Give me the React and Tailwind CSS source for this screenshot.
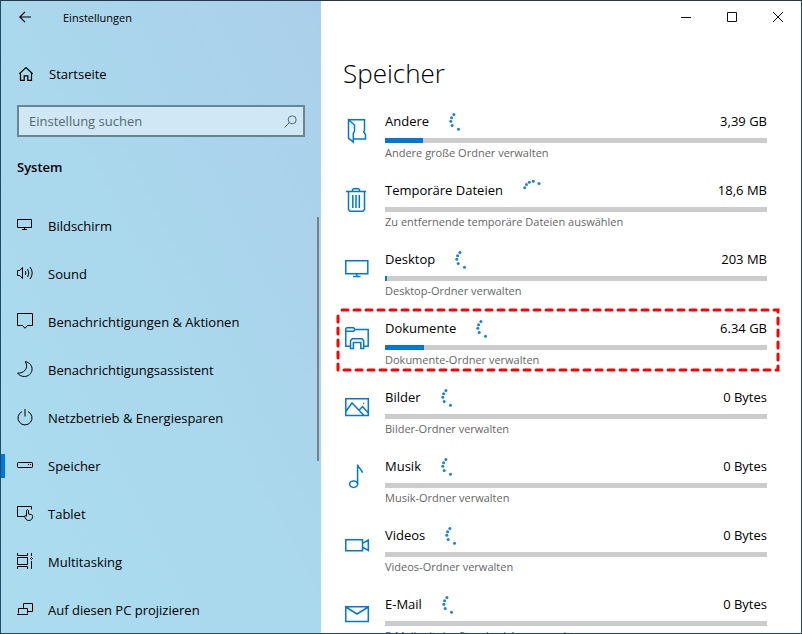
import React, { useState } from "react";

const NAV_ITEMS = [
  {
    id: "display",
    label: "Bildschirm",
    icon: <path d="M.5 2.5h14v8H.5zM7.5 10.5v2M5 12.5h5" />,
  },
  {
    id: "sound",
    label: "Sound",
    icon: (
      <>
        <path d="M.5 5.5v5h2.3L5.5 13.5V2.5L2.8 5.5z" />
        <path d="M8.3 6q1.2 2 0 4M10.6 4q2.6 4 0 8M13 2q4.4 6 0 12" />
      </>
    ),
  },
  {
    id: "notifications",
    label: "Benachrichtigungen & Aktionen",
    icon: <path d="M.5.5h15v12h-5L8 15.3 5.500 12.500h-5z" />,
  },
  {
    id: "focus",
    label: "Benachrichtigungsassistent",
    icon: (
      <path d="M8.300.6c4.500.9 7.200 4.400 6.700 8.400-.5 3.900-3.900 6.500-7.700 6.500-2.800 0-5.300-1.300-6.700-3.400C6.500 12.500 12.300 7.600 8.300.6z" />
    ),
  },
  {
    id: "power",
    label: "Netzbetrieb & Energiesparen",
    icon: <path d="M5 2.600a7 7 0 1 0 6 0M8 0v7.500" />,
  },
  {
    id: "storage",
    label: "Speicher",
    icon: (
      <>
        <rect x=".5" y="5.500" width="15" height="5" rx=".8" />
        <path d="M11 7.500h1M13 7.500h1" />
      </>
    ),
  },
  {
    id: "tablet",
    label: "Tablet",
    icon: (
      <>
        <path d="M14.500 4.500v-3H.5v10H7" />
        <path d="M9.500 11V5.500q1-1.500 2 0V9l3 .7q1.300.4 1.100 1.800c-.2 2.500-1.400 4-3.800 4S8.400 14 7.500 11q.8-1.200 2 .5" />
      </>
    ),
  },
  {
    id: "multitasking",
    label: "Multitasking",
    icon: (
      <>
        <path d="M.5 0v2.500h10V0M.5 4.500h10v7H.5zM.5 16v-2.500h10V16M14.500 0v3M14.500 8v8" />
        <path d="M14.500 4.500l1 1-1 1-1-1z" />
      </>
    ),
  },
  {
    id: "projecting",
    label: "Auf diesen PC projizieren",
    icon: (
      <path d="M6.500 7V2.500h9v8h-5M1.500 12.500v-5h9v5M0 13.500h11" />
    ),
  },
];

const STORAGE_ITEMS = [
  {
    label: "Andere",
    size: "3,39 GB",
    hint: "Andere große Ordner verwalten",
    percent: 10,
    icon: (
      <path d="M3.500.8l6 5.200v6l-1.200 2.500v8.700l-4.800-4zM3.500.8h16v10.400l-.8 1.800 1.800 2.500v4.500H8.500" />
    ),
  },
  {
    label: "Temporäre Dateien",
    size: "18,6 MB",
    hint: "Zu entfernende temporäre Dateien auswählen",
    percent: 0,
    spinnerPhase: "top",
    icon: (
      <path d="M1 3.500h20M7.500 3.500v-2l1-.8h5l1 .8v2M3.500 3.500v18l1.500 1.800h13l1.500-1.800v-18M7.800 7v13M11 7v13M14.300 7v13" />
    ),
  },
  {
    label: "Desktop",
    size: "203 MB",
    hint: "Desktop-Ordner verwalten",
    percent: 0.5,
    icon: <path d="M.8 3.700h22v13H.8zM11.800 16.700v3M8 19.600h7.500" />,
  },
  {
    label: "Dokumente",
    size: "6.34 GB",
    hint: "Dokumente-Ordner verwalten",
    percent: 10.3,
    highlighted: true,
    icon: (
      <path d="M5.500 20.300H.8V2.700l1-1h6.700l1.500 1.800h13.200v16.800h-4.500M.8 5.200h7.700L10 3.500M5.500 22.400v-7.600l1.700-2h9.800l1.700 2v7.600h-2.900v-5.900H8.400v5.900z" />
    ),
  },
  {
    label: "Bilder",
    size: "0 Bytes",
    hint: "Bilder-Ordner verwalten",
    percent: 0,
    icon: (
      <>
        <path d="M.8 3.700h22.500v16.800H.8zM.8 16.500l6.200-8.500 12 12.500M14 15.200l3.500-3.700 5.800 6.500" />
        <path d="M18 8.500h1.200" />
      </>
    ),
  },
  {
    label: "Musik",
    size: "0 Bytes",
    hint: "Musik-Ordner verwalten",
    percent: 0,
    icon: (
      <>
        <ellipse cx="8.600" cy="20.200" rx="4" ry="3.200" />
        <path d="M12.600 20.200V.5c.3 3.500 4.600 4.500 4.700 8.300" />
      </>
    ),
  },
  {
    label: "Videos",
    size: "0 Bytes",
    hint: "Videos-Ordner verwalten",
    percent: 0,
    icon: <path d="M.8 6.700h16.700v11H.8zM17.500 10.300l5.800-3.300v10.500l-5.800-3.300" />,
  },
  {
    label: "E-Mail",
    size: "0 Bytes",
    hint: "E-Mail mit der Standard-App verwalten",
    percent: 0,
    icon: <path d="M.8 4.800h22.500v14.700H.8zM.8 5l11.200 7L23.300 5" />,
  },
];

const SPINNER_DOTS = {
  left: [[4.9, 3.6], [2.6, 6.7], [1.8, 10.2], [3.2, 14.6], [9.5, 18.3]],
  top: [[1.7, 7.7], [3.5, 4.4], [6.3, 2.2], [10.3, 1.2], [16, 3.4]],
};

const Spinner = ({ phase = "left" }) => (
  <svg viewBox="0 0 20 20" className="size-5 shrink-0" fill="#1a83d8" aria-hidden="true">
    {SPINNER_DOTS[phase].map(([cx, cy]) => (
      <circle key={cx} cx={cx} cy={cy} r="1.500" />
    ))}
  </svg>
);

const HighlightFrame = () => (
  <span className="absolute -top-1.5 -right-[11px] bottom-0 -left-[7px] pointer-events-none">
    <svg className="w-full h-full overflow-visible" aria-hidden="true">
      <rect
        width="100%"
        height="100%"
        fill="none"
        stroke="#fe0000"
        strokeWidth="3"
        strokeLinecap="round"
        strokeDasharray="6 6"
        strokeDashoffset="-4"
      />
    </svg>
  </span>
);

const NavItem = ({ item, active, onSelect }) => (
  <li>
    <button
      type="button"
      onClick={() => onSelect(item.id)}
      aria-current={active ? "page" : undefined}
      className="relative flex items-center w-full h-12 gap-3.5 pl-4 text-left"
    >
      {active && <span className="absolute left-0 w-1 h-6 bg-[#0078d7]" />}
      <svg
        viewBox="0 0 17 18"
        className="w-[17px] h-[18px] shrink-0 overflow-visible"
        fill="none"
        stroke="currentColor"
        aria-hidden="true"
      >
        {item.icon}
      </svg>
      <span className="pt-0.5">{item.label}</span>
    </button>
  </li>
);

const Sidebar = () => {
  const [activeId, setActiveId] = useState("storage");
  const [query, setQuery] = useState("");

  return (
    <aside className="relative flex flex-col w-80 shrink-0 overflow-hidden bg-linear-to-tr from-[#aadcee] via-[#aad8ed] to-[#abcfea]">
      <header className="flex items-center h-8 gap-8 pl-[18px] text-[11px] shrink-0">
        <button type="button" aria-label="Zurück">
          <svg viewBox="0 0 12 12" className="size-3" fill="none" stroke="currentColor" strokeWidth="1.200">
            <path d="M6 .8L.8 6 6 11.200M.8 6H12" />
          </svg>
        </button>
        <span className="pt-0.5">Einstellungen</span>
      </header>

      <a href="#startseite" className="flex items-center h-12 gap-4 pl-[18px] mt-[17px] shrink-0">
        <svg viewBox="0 0 14 14" className="size-3.5" fill="none" stroke="currentColor" strokeWidth="1.200" aria-hidden="true">
          <path d="M.3 6.900L7 .6l6.700 6.300M1.500 6v7.400h3.700V8.800h3.600v4.600h3.700V6" />
        </svg>
        <span className="pt-0.5">Startseite</span>
      </a>

      <div className="relative mx-4 mt-[7px] shrink-0">
        <input
          type="text"
          aria-label="Einstellung suchen"
          placeholder="Einstellung suchen"
          value={query}
          onChange={(e) => setQuery(e.target.value)}
          className="block w-full h-8 pl-2.5 pr-8 border-2 border-[#698591] bg-[#d0e8f5] placeholder:text-[#566a72] outline-none"
        />
        <svg
          viewBox="0 0 13 13"
          className="absolute right-2 top-2.5 size-[13px] pointer-events-none"
          fill="none"
          stroke="#52656e"
          aria-hidden="true"
        >
          <circle cx="8.200" cy="4.800" r="4" />
          <path d="M5.300 7.700L.5 12.500" />
        </svg>
      </div>

      <h2 className="pl-4 mt-4 leading-7 font-semibold shrink-0">System</h2>

      <nav className="mt-[21px] min-h-0">
        <ul>
          {NAV_ITEMS.map((item) => (
            <NavItem key={item.id} item={item} active={item.id === activeId} onSelect={setActiveId} />
          ))}
        </ul>
      </nav>

      <span className="absolute right-0.5 top-54 w-0.5 h-61 bg-[#7d7f82]" />
    </aside>
  );
};

const StorageItem = ({ item }) => (
  <li className="relative">
    <a href="#ordner" className="flex gap-4">
      <svg
        viewBox="0 0 24 24"
        className="mt-2.5 size-6 shrink-0 overflow-visible"
        fill="none"
        stroke="#0078d7"
        strokeWidth="1.500"
        aria-hidden="true"
      >
        {item.icon}
      </svg>
      <div className="flex-1 min-w-0">
        <div className="flex items-center h-6 gap-5">
          <span className="pt-0.5 whitespace-nowrap">{item.label}</span>
          <Spinner phase={item.spinnerPhase} />
          <span className="pt-0.5 ml-auto whitespace-nowrap">{item.size}</span>
        </div>
        <div className="h-[5px] mt-[5px] bg-[#ccc]">
          <div className="h-full bg-[#0078d7]" style={{ width: `${item.percent}%` }} />
        </div>
        <p className="text-[11px] leading-5 whitespace-nowrap text-[#666]">{item.hint}</p>
      </div>
    </a>
    {item.highlighted && <HighlightFrame />}
  </li>
);

const WindowButton = ({ label, d }) => (
  <button type="button" aria-label={label} className="flex items-center justify-center h-8 w-[46px]">
    <svg viewBox="0 0 10 10" className="size-2.5" fill="none" stroke="#111">
      <path d={d} />
    </svg>
  </button>
);

const StoragePage = () => (
  <main className="flex flex-col flex-1 min-w-0 overflow-hidden bg-white">
    <header className="flex justify-end shrink-0">
      <WindowButton label="Minimieren" d="M0 5.500h10" />
      <WindowButton label="Maximieren" d="M.5.500h9v9h-9z" />
      <WindowButton label="Schließen" d="M0 0l10 10M10 0L0 10" />
    </header>
    <h1 className="pl-[22px] mt-5 text-[26px] leading-10 font-light shrink-0">Speicher</h1>
    <ul className="flex flex-col pl-6 pr-[34px] mt-4 gap-[15px]">
      {STORAGE_ITEMS.map((item) => (
        <StorageItem key={item.label} item={item} />
      ))}
    </ul>
  </main>
);

const App = () => (
  <div className="flex h-screen overflow-hidden border border-[#1c4c68] border-t-[#26374a] text-[13px] text-black font-['Segoe_UI','Open_Sans',sans-serif]">
    <Sidebar />
    <StoragePage />
  </div>
);

export default App;
